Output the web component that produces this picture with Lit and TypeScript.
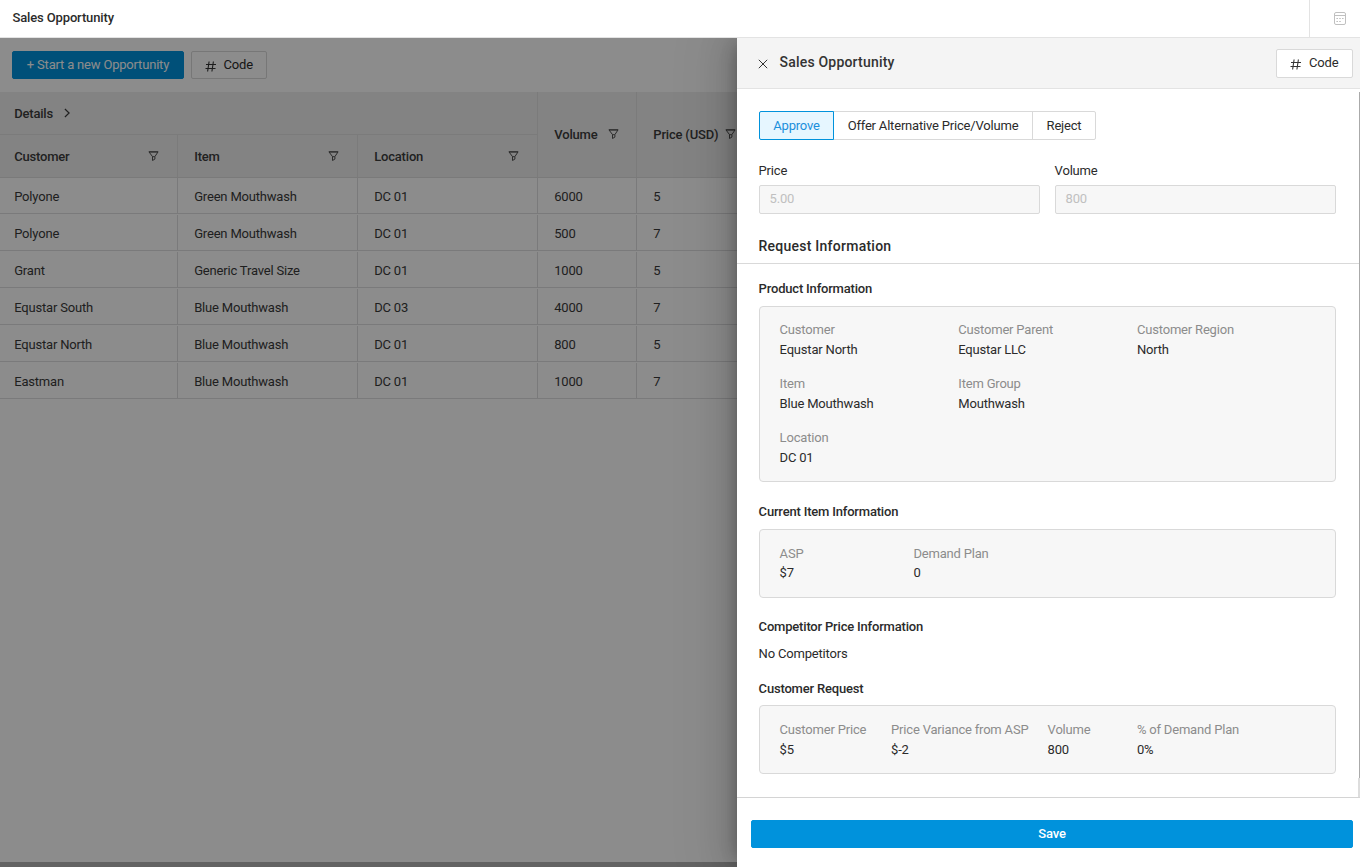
import { LitElement, html, css } from "lit";
import { customElement } from "lit/decorators.js";

const funnel = html`<svg class="funnel" width="11" height="11" viewBox="0 0 11 11" fill="none" stroke="#505050" stroke-width="1">
  <path d="M0.9 .8h9.2L6.9 5.6v2.5L4.5 9.5V5.6Z" /><path d="M1 1h9M4.4 5.7h2.4" /></svg>`;

const hash = html`<svg class="hash" width="11" height="11" viewBox="0 0 11 11" fill="none" stroke="#333" stroke-width="1.1">
  <path d="M4.1 .5L2.6 10.5M8.4 .5L6.9 10.5M1 3.5h10M.5 7.5h10" /></svg>`;

const rows = [
  ["Polyone", "Green Mouthwash", "DC 01", "6000", "5"],
  ["Polyone", "Green Mouthwash", "DC 01", "500", "7"],
  ["Grant", "Generic Travel Size", "DC 01", "1000", "5"],
  ["Equstar South", "Blue Mouthwash", "DC 03", "4000", "7"],
  ["Equstar North", "Blue Mouthwash", "DC 01", "800", "5"],
  ["Eastman", "Blue Mouthwash", "DC 01", "1000", "7"],
];

const product = [
  ["Customer", "Equstar North"],
  ["Customer Parent", "Equstar LLC"],
  ["Customer Region", "North"],
  ["Item", "Blue Mouthwash"],
  ["Item Group", "Mouthwash"],
  null,
  ["Location", "DC 01"],
];

const field = (f: string[] | null) =>
  f ? html`<div class="field"><div class="label">${f[0]}</div><div class="value">${f[1]}</div></div>` : html`<div></div>`;

@customElement("app-root")
export class AppRoot extends LitElement {
  static styles = css`
    :host { display: block; height: 867px; position: relative; overflow: hidden; background: #fff;
      font: 400 13px/20px Roboto, sans-serif; letter-spacing: -0.19px; color: #2b2b2b; }
    * { box-sizing: border-box; }
    svg { display: block; flex: none; }
    .top { height: 38px; display: flex; justify-content: space-between; border-bottom: 1px solid #e3e3e3; }
    .top-title { padding: 8px 0 0 12.5px; font-weight: 500; letter-spacing: -0.14px; }
    .top-tool { width: 51px; border-left: 1px solid #e3e3e3; padding: 12px 0 0 24px; }
    .page { height: 829px; display: flex; flex-direction: column; }
    .toolbar { height: 54px; display: flex; gap: 7px; padding: 13px 12px 0; }
    .btn { height: 28px; display: flex; align-items: center; justify-content: center; border-radius: 2px;
      border: 1px solid #d9d9d9; background: #fff; }
    .btn.primary { background: #0092dc; border-color: #0092dc; color: #fff; }
    .start { width: 172px; }
    .code { width: 76px; gap: 7.5px; letter-spacing: -0.1px; }
    .code .hash { margin-top: 2px; }
    .head { display: grid; grid-template-columns: 538px 99px 1fr; height: 86px; background: #efefef; font-weight: 500; color: #3c3c3c;
      border-bottom: 1px solid #dfdfdf; }
    .head span { padding-top: 2px; }
    .group { display: grid; grid-template-rows: 43px 42px; border-right: 1px solid #e1e1e1; }
    .details { display: flex; align-items: center; gap: 11px; padding: 0 14.2px; border-bottom: 1px solid #e1e1e1; }
    .cols { display: grid; grid-template-columns: 178px 180px 179px; }
    .col { display: flex; align-items: center; justify-content: space-between; padding: 0 17.7px 0 16.2px; border-right: 1px solid #e1e1e1; }
    .col:first-child { padding-left: 14.2px; }
    .col:last-child { border-right: 0; }
    .single { display: flex; align-items: center; padding: 0 0 1px 16.3px; border-right: 1px solid #e1e1e1; }
    .single .funnel { margin-left: 10.2px; }
    .single.price .funnel { margin-left: 6.2px; }
    .row { display: grid; grid-template-columns: 178px 180px 180px 99px 1fr; height: 37px; border-bottom: 1px solid #dedee0; color: #3a3a3a; }
    .row.first { height: 36px; }
    .cell { display: flex; align-items: center; padding: 3px 0 0 16.2px; margin-top: 1px; border-right: 1px solid #dedee0; }
    .row.first .cell { margin-top: 0; }
    .cell:first-child { padding-left: 14.2px; }
    .bottom { margin-top: auto; height: 5px; background: #b4b4b4; }
    .mask { position: absolute; left: 0; top: 38px; right: 0; bottom: 0; background: rgba(0,0,0,.45); }
    .clip { position: absolute; top: 38px; right: 0; bottom: 0; left: 0; overflow: hidden; }
    .drawer { position: absolute; top: 0; right: 0; bottom: 0; width: 623px; background: #fff; display: flex; flex-direction: column;
      box-shadow: -6px 0 16px -8px rgba(0,0,0,.28), -9px 0 28px 0 rgba(0,0,0,.15), -12px 0 48px 16px rgba(0,0,0,.05); }
    .dhead { height: 51px; background: #f4f4f4; border-bottom: 1px solid #e3e3e3; display: flex; padding: 11px 7px 0 20.5px; }
    .close { margin: 10px 12px 0 0; }
    .dtitle { font-size: 14px; font-weight: 500; letter-spacing: 0.2px; padding-top: 3px; flex: 1; color: #333; }
    .dhead .code { height: 29px; width: 77px; padding-bottom: 2px; gap: 7.5px; }
    .dhead .hash { margin-top: 3px; }
    .body { height: 709px; position: relative; border-bottom: 1px solid #d4d4d4; padding-top: 22px; }
    .inner { padding: 0 24px 0 22px; }
    .tabs { display: flex; height: 29px; }
    .tab { border: 1px solid #d9d9d9; margin-left: -1px; display: flex; align-items: center; justify-content: center; }
    .tab.on { margin: 0; width: 75px; border-color: #0092dc; background: #e6f6ff; color: #1b8fdc; border-radius: 2px 0 0 2px; position: relative; }
    .tab.offer { width: 200px; }
    .tab.reject { width: 64px; border-radius: 0 2px 2px 0; }
    .inputs { display: grid; grid-template-columns: 281px 281px; gap: 15px; margin-top: 21px; text-indent: -0.4px; }
    .input { margin-top: 4px; height: 29px; border: 1px solid #d9d9d9; border-radius: 2px; background: #f7f7f7; color: #c0c0c0; padding: 3px 10px; }
    .section { font-size: 14px; font-weight: 500; letter-spacing: 0.25px; height: 50px; padding: 22px 21.5px 0; border-bottom: 1px solid #d9d9d9; }
    .sub { font-weight: 500; height: 27px; text-indent: -0.4px; }
    .sub.a { margin-top: 15px; }
    .sub.b { margin-top: 20px; }
    .sub.c { margin-top: 19px; }
    .sub.d { margin-top: 15px; height: 26px; }
    .none { text-indent: -0.4px; }
    .card { border: 1px solid #d9d9d9; border-radius: 4px; background: #f7f7f7; padding: 13px 19.6px 0; display: grid; align-content: start; }
    .card.product { height: 176px; grid-template-columns: 178.7px 178.7px 1fr; row-gap: 14px; }
    .card.current { height: 69px; grid-template-columns: 133.8px 1fr; }
    .card.current .label { padding-top: 1px; margin-bottom: -1px; }
    .card.request { height: 69px; padding-top: 14px; grid-template-columns: 111.5px 156.5px 89.3px 1fr; }
    .label { color: #8c8c8c; }
    .thumb { position: absolute; right: 0; top: 3px; width: 1px; height: 686px; background: #aaa; }
    .track { position: absolute; right: 0; bottom: 0; width: 2px; height: 19px; background: #ddd; }
    .foot { padding: 22px 7px 0 14px; }
    .save { font-weight: 500; }
  `;

  render() {
    return html`
      <div class="top">
        <div class="top-title">Sales Opportunity</div>
        <div class="top-tool">
          <svg width="13" height="13" viewBox="0 0 13 13" fill="none" stroke="#c0c0c0" stroke-width="1">
            <rect x=".5" y=".5" width="11" height="12" rx="1.5" /><path d="M.5 3.5H11.5" />
            <path d="M2.4 6.5h8M2.4 9.5h4.6" stroke-dasharray="1.6 1.2" />
          </svg>
        </div>
      </div>
      <div class="page">
        <div class="toolbar">
          <div class="btn primary start">+ Start a new Opportunity</div>
          <div class="btn code">${hash}<span>Code</span></div>
        </div>
        <div class="head">
          <div class="group">
            <div class="details"><span>Details</span>
              <svg width="7" height="10" viewBox="0 0 7 10" fill="none" stroke="#3c3c3c" stroke-width="1.2"><path d="M.9 1L5.1 5 .9 9" /></svg>
            </div>
            <div class="cols">${["Customer", "Item", "Location"].map((c) => html`<div class="col"><span>${c}</span>${funnel}</div>`)}</div>
          </div>
          <div class="single"><span>Volume</span>${funnel}</div>
          <div class="single price"><span>Price (USD)</span>${funnel}</div>
        </div>
        ${rows.map((r, i) => html`<div class="row ${i ? "" : "first"}">${r.map((c) => html`<div class="cell">${c}</div>`)}</div>`)}
        <div class="bottom"></div>
      </div>
      <div class="mask"></div>
      <div class="clip"><div class="drawer">
        <div class="dhead">
          <svg class="close" width="10" height="10" viewBox="0 0 10 10" stroke="#333" stroke-width="1"><path d="M.8 .8l8.4 8.4M9.2 .8L.8 9.2" /></svg>
          <div class="dtitle">Sales Opportunity</div>
          <div class="btn code">${hash}<span>Code</span></div>
        </div>
        <div class="body">
          <div class="inner">
            <div class="tabs">
              <div class="tab on">Approve</div><div class="tab offer">Offer Alternative Price/Volume</div><div class="tab reject">Reject</div>
            </div>
            <div class="inputs">
              <div>Price<div class="input">5.00</div></div>
              <div>Volume<div class="input">800</div></div>
            </div>
          </div>
          <div class="section">Request Information</div>
          <div class="inner">
            <div class="sub a">Product Information</div>
            <div class="card product">${product.map(field)}</div>
            <div class="sub b">Current Item Information</div>
            <div class="card current">${[["ASP", "$7"], ["Demand Plan", "0"]].map(field)}</div>
            <div class="sub c">Competitor Price Information</div>
            <div class="none">No Competitors</div>
            <div class="sub d">Customer Request</div>
            <div class="card request">${[["Customer Price", "$5"], ["Price Variance from ASP", "$-2"], ["Volume", "800"], ["% of Demand Plan", "0%"]].map(field)}</div>
          </div>
          <div class="thumb"></div><div class="track"></div>
        </div>
        <div class="foot"><div class="btn primary save">Save</div></div>
      </div></div>
    `;
  }
}
